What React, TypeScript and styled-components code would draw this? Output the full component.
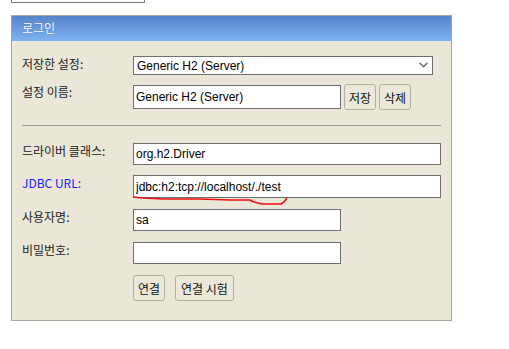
import React from "react";
import styled, { createGlobalStyle } from "styled-components";

const GlobalStyle = createGlobalStyle`
  body {
    margin: 0;
    background: #fff;
    font-family: "Noto Sans CJK KR", "Liberation Sans", sans-serif;
  }
`;

const Page = styled.div`
  padding-left: 11px;
`;

const TopBox = styled.div`
  width: 132px;
  height: 2px;
  background: #fff;
  border: 1px solid #7a7a7a;
  border-top: none;
`;

const Panel = styled.div`
  margin-top: 12px;
  width: 439px;
  height: 304px;
  background: #eae7d8;
  border: 1px solid #a8a79a;
`;

const Header = styled.div`
  height: 25px;
  padding-left: 10px;
  background: linear-gradient(#5683c9, #7db4f2);
  color: #fff;
  font-size: 12px;
  line-height: 24px;
  text-shadow: 0 0 1px rgba(40, 70, 140, 0.6);
`;

const Body = styled.div`
  padding: 15px 0 0 10px;
`;

const Row = styled.div<{ $gap?: number }>`
  display: flex;
  align-items: flex-start;
  margin-bottom: ${(p) => p.$gap ?? 11}px;
`;

const Label = styled.div<{ $link?: boolean }>`
  width: 111px;
  flex: none;
  font-size: 12px;
  line-height: 16px;
  color: ${(p) => (p.$link ? "#1a1aff" : "#222")};
`;

const Field = styled.div`
  position: relative;
  display: flex;
  align-items: center;
  gap: 3px;
`;

const Input = styled.input<{ $w: number; $h?: number }>`
  box-sizing: border-box;
  width: ${(p) => p.$w}px;
  height: ${(p) => p.$h ?? 22}px;
  margin: 0;
  padding: 0 2px;
  border: 1px solid #6f6f6f;
  border-radius: 0;
  background: #fff;
  font-family: "Liberation Sans", Arial, sans-serif;
  font-size: 12px;
  color: #000;
  outline: none;
`;

const Select = styled.select`
  box-sizing: border-box;
  width: 300px;
  height: 19px;
  margin: 0;
  padding: 0 0 0 3px;
  appearance: none;
  border: 1px solid #6f6f6f;
  border-radius: 0;
  background: #fff;
  font-family: "Liberation Sans", Arial, sans-serif;
  font-size: 12px;
  color: #000;
  outline: none;
`;

const Chevron = styled.svg`
  position: absolute;
  right: 5px;
  top: 6px;
  pointer-events: none;
`;

const Button = styled.button<{ $w: number }>`
  box-sizing: border-box;
  width: ${(p) => p.$w}px;
  height: 26px;
  margin: 0;
  padding: 0;
  background: #ebe8d9;
  border: 1px solid #b3b0a2;
  border-radius: 3px;
  font-family: "Noto Sans CJK KR", sans-serif;
  font-size: 12px;
  color: #111;
`;

const Divider = styled.div`
  width: 419px;
  height: 1px;
  background: #9d9c94;
  margin: 15px 0 17px;
`;

const Actions = styled.div`
  display: flex;
  gap: 10px;
  margin-left: 111px;
`;

const Squiggle = styled.svg`
  position: absolute;
  left: 0;
  top: 0;
  overflow: visible;
  pointer-events: none;
`;

export default function App() {
  return (
    <>
      <GlobalStyle />
      <Page>
        <TopBox />
        <Panel>
          <Header>로그인</Header>
          <Body>
            <Row $gap={9}>
              <Label>저장한 설정:</Label>
              <Field>
                <Select defaultValue="Generic H2 (Server)">
                  <option>Generic H2 (Server)</option>
                </Select>
                <Chevron width="9" height="6" viewBox="0 0 9 6">
                  <polyline points="0.5,0.8 4.5,4.8 8.5,0.8" fill="none" stroke="#6a6a6a" strokeWidth="1.3" />
                </Chevron>
              </Field>
            </Row>
            <Row $gap={0}>
              <Label>설정 이름:</Label>
              <Field>
                <Input $w={208} $h={24} defaultValue="Generic H2 (Server)" />
                <Button $w={32}>저장</Button>
                <Button $w={32}>삭제</Button>
              </Field>
            </Row>
            <Divider />
            <Row $gap={10}>
              <Label>드라이버 클래스:</Label>
              <Input $w={308} defaultValue="org.h2.Driver" />
            </Row>
            <Row>
              <Label $link>JDBC URL:</Label>
              <Field>
                <Input $w={308} $h={23} defaultValue="jdbc:h2:tcp://localhost/./test" />
                <Squiggle width="160" height="32">
                  <polyline
                    points="0,22 10,23 30,24 67,24 97,25 117,25 121,27 129,29 148,29 151,27 154,23"
                    fill="none"
                    stroke="#f01010"
                    strokeWidth="1.6"
                    strokeLinejoin="round"
                  />
                </Squiggle>
              </Field>
            </Row>
            <Row>
              <Label>사용자명:</Label>
              <Input $w={208} defaultValue="sa" />
            </Row>
            <Row>
              <Label>비밀번호:</Label>
              <Input $w={208} type="password" />
            </Row>
            <Actions>
              <Button $w={32}>연결</Button>
              <Button $w={59}>연결 시험</Button>
            </Actions>
          </Body>
        </Panel>
      </Page>
    </>
  );
}
